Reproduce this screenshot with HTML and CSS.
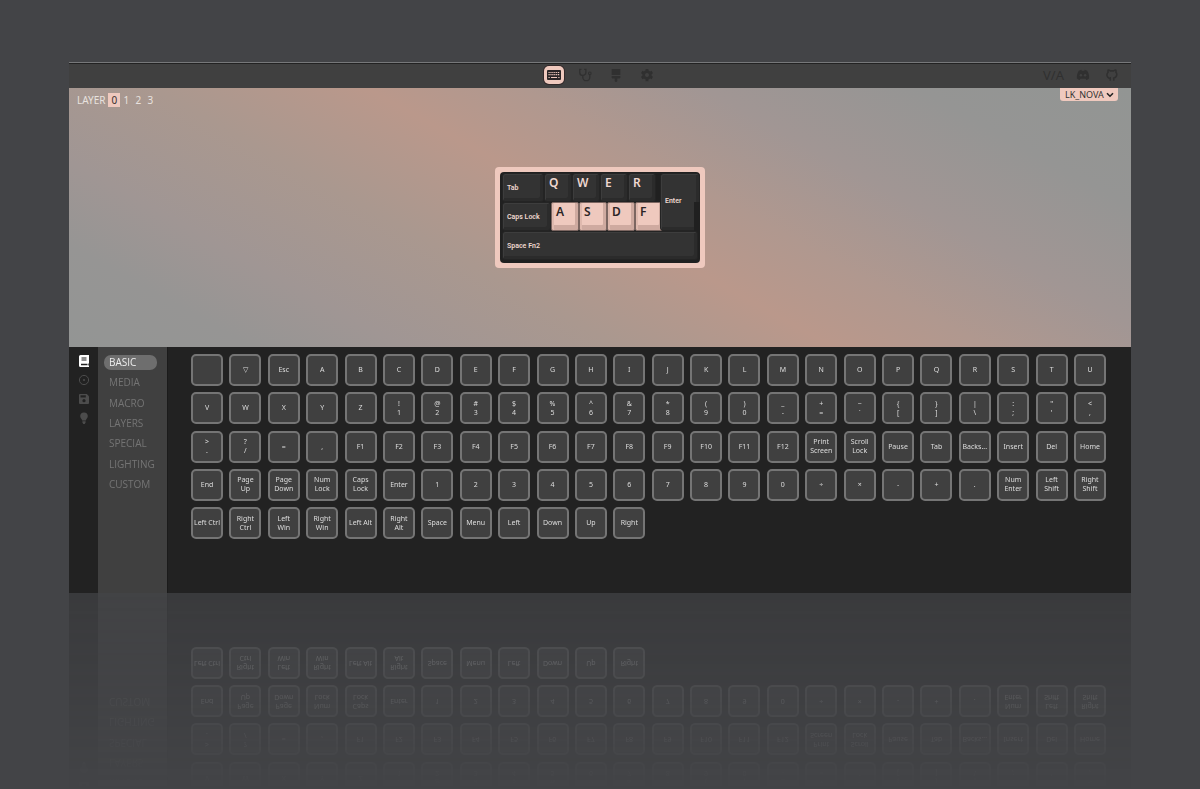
FILE: index.html
```html
<!DOCTYPE html>
<html lang="en">
<head>
<meta charset="utf-8">
<title>VIA</title>
<link rel="stylesheet" href="styles.css">
</head>
<body>
<main class="app">
  <header class="topbar">
    <nav class="modes" aria-label="Modes">
      <button class="mode mode-on" aria-label="Configure"><svg viewBox="0 0 14 10"><rect width="14" height="10" rx="1" fill="currentColor"/><path d="M1.500 2.500h11M1.500 4.700h11" fill="none" stroke="#efc9be" stroke-width="1.200" stroke-dasharray="1.200 .7"/><path d="M1.500 7.500h1.200M4 7.500h6M11.300 7.500h1.200" stroke="#efc9be" stroke-width="1.200"/></svg></button>
      <button class="mode" aria-label="Test"><svg viewBox="0 0 16 16"><path d="M4 1.500H2V5a3.500 3.500 0 0 0 7 0V1.500H7M5.500 8.500V10.500a4 4 0 0 0 8 0V7.500" fill="none" stroke="currentColor" stroke-width="1.500"/><circle cx="13.500" cy="6" r="1.500" fill="none" stroke="currentColor" stroke-width="1.200"/></svg></button>
      <button class="mode" aria-label="Design"><svg viewBox="0 0 16 16"><path d="M3 1h10v7H3zM3 9h10v2l-1 1H9.500v2.500a1.500 1.500 0 0 1-3 0V12H4l-1-1z" fill="currentColor"/></svg></button>
      <button class="mode" aria-label="Settings"><svg viewBox="0 0 16 16"><path d="M8 1v14M1.900 4.500l12.200 7M1.900 11.500l12.200-7" stroke="currentColor" stroke-width="3.200"/><circle cx="8" cy="8" r="3.800" fill="none" stroke="currentColor" stroke-width="3"/><circle cx="8" cy="8" r="2.300" fill="#404040"/></svg></button>
    </nav>
    <div class="links">
      <a href="#" class="brand">V/A</a>
      <a href="#" aria-label="Discord"><svg viewBox="0 0 16 16"><path d="M3.200 3 6 2l.6 1.200h2.800L10 2l2.800 1C14.500 5.500 15.300 8.500 15 12l-3 2-1-1.600H5L4 14l-3-2c-.3-3.500.5-6.500 2.200-9z" fill="currentColor"/><circle cx="5.600" cy="8.300" r="1.400" fill="#404040"/><circle cx="10.400" cy="8.300" r="1.400" fill="#404040"/></svg></a>
      <a href="#" aria-label="GitHub"><svg viewBox="0 0 16 16"><path d="M6 14.500v-3c-1 .5-2.500 0-3-1.500M10 14.500v-3c2.500-.5 3.500-2 3.500-4 0-1-.4-2-1-2.600.2-.8.200-1.700-.2-2.600-1 0-1.800.5-2.500 1H6.200c-.7-.5-1.500-1-2.500-1-.4.900-.4 1.800-.2 2.600C1.500 7 2 9.500 3.500 10.600" fill="none" stroke="currentColor" stroke-width="1.800"/></svg></a>
    </div>
  </header>

  <section class="stage">
    <div class="layers"><span>LAYER</span><button class="layer layer-on">0</button><button class="layer">1</button><button class="layer">2</button><button class="layer">3</button></div>
    <div class="picker">
      <select class="board-name" aria-label="Keyboard"><option>LK_NOVA</option></select>
      <svg class="chevron" viewBox="0 0 8 6"><path d="M1 1.200l3 3 3-3" fill="none" stroke="currentColor" stroke-width="1.600"/></svg>
    </div>
    <div class="board">
      <div class="plate">
        <button class="cap tab">Tab</button>
        <button class="cap letter q">Q</button>
        <button class="cap letter w">W</button>
        <button class="cap letter e">E</button>
        <button class="cap letter r">R</button>
        <button class="cap enter">Enter</button>
        <button class="cap caps">Caps Lock</button>
        <button class="cap letter accent a">A</button>
        <button class="cap letter accent s">S</button>
        <button class="cap letter accent d">D</button>
        <button class="cap letter accent f">F</button>
        <button class="cap space">Space Fn2</button>
      </div>
    </div>
  </section>

  <section class="panel">
    <nav class="rail" aria-label="Sections">
      <button class="rail-item rail-on" aria-label="Keymap"><svg viewBox="0 0 12 12"><path d="M2.500 0H11v8.500h-.7v2H11V12H2.500A1.500 1.500 0 0 1 1 10.500v-9A1.500 1.500 0 0 1 2.500 0z" fill="currentColor"/><path d="M3.500 2.500h5v1h-5zM3.500 4.500h5v1h-5zM3 8.700h6.500v1.500H3z" fill="#222"/></svg></button>
      <button class="rail-item" aria-label="Macros"><svg viewBox="0 0 12 12"><circle cx="6" cy="6" r="4.600" fill="none" stroke="currentColor"/><circle cx="6" cy="6" r="1" fill="currentColor"/></svg></button>
      <button class="rail-item" aria-label="Save and load"><svg viewBox="0 0 12 12"><path d="M2 1h6.800L11 3.200V10a1 1 0 0 1-1 1H2a1 1 0 0 1-1-1V2a1 1 0 0 1 1-1z" fill="currentColor"/><path d="M2.500 2.300h5.300v2.200H2.500z" fill="#222"/><circle cx="6" cy="7.700" r="1.600" fill="#222"/></svg></button>
      <button class="rail-item" aria-label="Lighting"><svg viewBox="0 0 12 12"><path d="M6 .5a3.800 3.800 0 0 1 3.800 3.800C9.800 6.200 8 7 7.800 8.600H4.200C4 7 2.200 6.200 2.200 4.300A3.800 3.800 0 0 1 6 .5zM4.400 9.200h3.200v1.300L6.700 12H5.300l-.9-1.500z" fill="currentColor"/></svg></button>
    </nav>
    <nav class="menu" aria-label="Key groups">
      <button class="menu-item menu-on">BASIC</button>
      <button class="menu-item">MEDIA</button>
      <button class="menu-item">MACRO</button>
      <button class="menu-item">LAYERS</button>
      <button class="menu-item">SPECIAL</button>
      <button class="menu-item">LIGHTING</button>
      <button class="menu-item">CUSTOM</button>
    </nav>
    <div class="keys">
      <button class="key" aria-label="None"></button><button class="key">▽</button><button class="key">Esc</button><button class="key">A</button><button class="key">B</button><button class="key">C</button><button class="key">D</button><button class="key">E</button><button class="key">F</button><button class="key">G</button><button class="key">H</button><button class="key">I</button><button class="key">J</button><button class="key">K</button><button class="key">L</button><button class="key">M</button><button class="key">N</button><button class="key">O</button><button class="key">P</button><button class="key">Q</button><button class="key">R</button><button class="key">S</button><button class="key">T</button><button class="key">U</button>
      <button class="key">V</button><button class="key">W</button><button class="key">X</button><button class="key">Y</button><button class="key">Z</button><button class="key">!<br>1</button><button class="key">@<br>2</button><button class="key">#<br>3</button><button class="key">$<br>4</button><button class="key">%<br>5</button><button class="key">^<br>6</button><button class="key">&amp;<br>7</button><button class="key">*<br>8</button><button class="key">(<br>9</button><button class="key">)<br>0</button><button class="key">_<br>-</button><button class="key">+<br>=</button><button class="key">~<br>`</button><button class="key">{<br>[</button><button class="key">}<br>]</button><button class="key">|<br>\</button><button class="key">:<br>;</button><button class="key">"<br>'</button><button class="key">&lt;<br>,</button>
      <button class="key">&gt;<br>.</button><button class="key">?<br>/</button><button class="key">=</button><button class="key">,</button><button class="key">F1</button><button class="key">F2</button><button class="key">F3</button><button class="key">F4</button><button class="key">F5</button><button class="key">F6</button><button class="key">F7</button><button class="key">F8</button><button class="key">F9</button><button class="key">F10</button><button class="key">F11</button><button class="key">F12</button><button class="key">Print<br>Screen</button><button class="key">Scroll<br>Lock</button><button class="key">Pause</button><button class="key">Tab</button><button class="key">Backs...</button><button class="key">Insert</button><button class="key">Del</button><button class="key">Home</button>
      <button class="key">End</button><button class="key">Page<br>Up</button><button class="key">Page<br>Down</button><button class="key">Num<br>Lock</button><button class="key">Caps<br>Lock</button><button class="key">Enter</button><button class="key">1</button><button class="key">2</button><button class="key">3</button><button class="key">4</button><button class="key">5</button><button class="key">6</button><button class="key">7</button><button class="key">8</button><button class="key">9</button><button class="key">0</button><button class="key">÷</button><button class="key">×</button><button class="key">-</button><button class="key">+</button><button class="key">.</button><button class="key">Num<br>Enter</button><button class="key">Left<br>Shift</button><button class="key">Right<br>Shift</button>
      <button class="key">Left Ctrl</button><button class="key">Right<br>Ctrl</button><button class="key">Left<br>Win</button><button class="key">Right<br>Win</button><button class="key">Left Alt</button><button class="key">Right<br>Alt</button><button class="key">Space</button><button class="key">Menu</button><button class="key">Left</button><button class="key">Down</button><button class="key">Up</button><button class="key">Right</button>
    </div>
  </section>
</main>
</body>
</html>
```

FILE: styles.css
```css
* {
  box-sizing: border-box;
}

body {
  margin: 0;
  min-height: 100vh;
  padding: 62px 69px 0;
  overflow: hidden;
  background: #434447;
  font-family: "Noto Sans", "Open Sans", sans-serif;
}

button,
select {
  margin: 0;
  padding: 0;
  border: 0;
  background: none;
  color: inherit;
  font: inherit;
}

svg {
  display: block;
}

.topbar {
  display: grid;
  grid-template-columns: 1fr auto 1fr;
  align-items: center;
  height: 26px;
  padding: 0 12px 2px;
  border-top: 1px solid #77787a;
  background: #404040;
  box-shadow: inset 0 1px #222;
  color: #303030;
}

.modes {
  display: flex;
  grid-column: 2;
  align-items: center;
  gap: 11px;
}

.mode {
  display: grid;
  place-items: center;
  width: 20px;
  height: 18px;
}

.mode svg {
  width: 14px;
  height: 14px;
}

.mode-on {
  border-radius: 5px;
  background: #efc9be;
  box-shadow: 0 0 0 1px #33292a;
  color: #2a2526;
}

.links {
  display: flex;
  justify-content: flex-end;
  align-items: center;
  gap: 15px;
}

.links a {
  color: inherit;
  text-decoration: none;
}

.links svg {
  width: 14px;
  height: 14px;
}

.links .brand {
  margin-right: -3px;
  font-size: 13px;
  line-height: 14px;
}

.stage {
  position: relative;
  display: flex;
  justify-content: center;
  align-items: center;
  min-height: 259px;
  background: linear-gradient(29deg, #939594 0%, #969594 12%, #a09694 22%, #aa988f 36%, #ba988b 50%, #b0988f 60%, #a19694 72%, #959594 86%, #929593 100%);
}

.layers {
  position: absolute;
  top: 5px;
  left: 8px;
  display: flex;
  align-items: center;
  color: #e8e2df;
  font-size: 10px;
  line-height: 14px;
}

.layer {
  width: 12px;
}

.layers span {
  margin-right: 3px;
}

.layer-on {
  background: #efc9be;
  color: #3a3030;
}

.picker {
  position: absolute;
  top: 0;
  right: 13px;
  display: flex;
}

.board-name {
  width: 58px;
  height: 13px;
  padding-left: 5px;
  border-radius: 0 0 3px 3px;
  background: #efc9be;
  color: #333;
  font-size: 9px;
  line-height: 13px;
  appearance: none;
}

.chevron {
  position: absolute;
  top: 4px;
  right: 4px;
  width: 8px;
  height: 6px;
  color: #222;
}

.board {
  padding: 5px;
  border-radius: 4px;
  background: #efc9be;
}

.plate {
  display: grid;
  grid-template-columns: repeat(28, 7px);
  grid-template-rows: repeat(3, 29px);
  padding: 1px 2px 3px;
  border-radius: 4px;
  background: #202020;
}

.cap {
  padding: 0 4px;
  border: 1px solid #242424;
  border-radius: 3px;
  background: #333;
  box-shadow: inset 1px 1px #3d3d3d, inset -3px -3px #2b2b2b;
  color: #efd8d0;
  font-family: Roboto, sans-serif;
  font-size: 7px;
  font-weight: 600;
  text-align: left;
}

.letter {
  display: flex;
  padding: 1px 4px;
  font-family: "Noto Sans", sans-serif;
  font-size: 12px;
  line-height: 16px;
}

.accent {
  border-color: #7c6661;
  border-radius: 2px;
  background: #efc9be;
  box-shadow: inset 2px 0 #dfb9ae, inset -3px -5px #cfaaa0;
  color: #2c2526;
}

.tab { grid-area: 1 / 1 / 2 / 7; }
.q { grid-area: 1 / 7 / 2 / 11; }
.w { grid-area: 1 / 11 / 2 / 15; }
.e { grid-area: 1 / 15 / 2 / 19; }
.r { grid-area: 1 / 19 / 2 / 23; }
.caps { grid-area: 2 / 1 / 3 / 8; }
.a { grid-area: 2 / 8 / 3 / 12; }
.s { grid-area: 2 / 12 / 3 / 16; }
.d { grid-area: 2 / 16 / 3 / 20; }
.f { grid-area: 2 / 20 / 3 / 24; }
.space { grid-area: 3 / 1 / 4 / 29; }

.enter {
  grid-area: 1 / 24 / 3 / 29;
  margin: 0 -2px 0 -3px;
  padding-bottom: 2px;
  clip-path: polygon(0 0, 100% 0, 100% 50%, 85% 50%, 85% 100%, 0 100%);
}

.panel {
  display: flex;
  min-height: 246px;
  background: #222;
  -webkit-box-reflect: below 0 linear-gradient(transparent 20%, rgba(0, 0, 0, 0.28));
}

.rail {
  display: flex;
  flex-direction: column;
  align-items: center;
  gap: 7px;
  width: 29px;
  padding-top: 8px;
  color: #4c4c4c;
}

.rail-item svg {
  width: 12px;
  height: 12px;
}

.rail-on {
  color: #fff;
}

.menu {
  display: flex;
  flex-direction: column;
  justify-content: space-between;
  width: 70px;
  padding: 8px 10px 101px 6px;
  border-right: 1px solid #1b1b1b;
  background: #404040;
  color: #747474;
  font-family: "Open Sans", sans-serif;
  font-size: 10px;
  line-height: 15px;
}

.menu-item {
  padding: 0 5px;
  border-radius: 7px;
  text-align: left;
}

.menu-on {
  background: #6e6e6e;
  color: #eee;
}

.keys {
  display: grid;
  flex: 1;
  grid-template-columns: repeat(24, 32px);
  grid-auto-rows: 32px;
  justify-content: space-between;
  align-content: space-between;
  padding: 7px 25px 54px 23px;
}

.key {
  padding-bottom: 1px;
  border: 2px solid #757575;
  border-radius: 5px;
  background: #404040;
  color: #ddd;
  font-size: 7px;
  line-height: 9px;
  white-space: nowrap;
}
```
